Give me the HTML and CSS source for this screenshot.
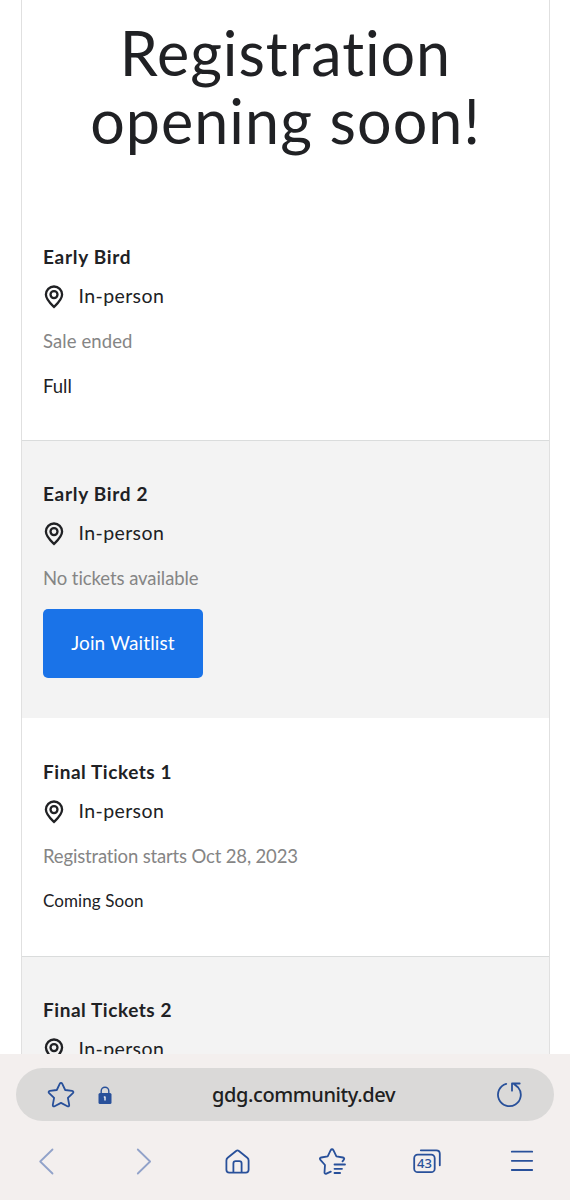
FILE: index.html
```
<!DOCTYPE html>
<html lang="en">
<head>
<meta charset="utf-8">
<title>Registration</title>
<link rel="stylesheet" href="styles.css">
</head>
<body>
<svg class="defs" width="0" height="0">
  <symbol id="pin" viewBox="0 0 20 24">
    <path d="M10 22C7.200 19.300 1.900 14.600 1.900 9.600a8.100 8.100 0 0 1 16.200 0C18.100 14.600 12.800 19.300 10 22Z"/>
    <circle cx="10" cy="9.600" r="3.500"/>
  </symbol>
</svg>
<div class="screen">
  <main class="viewport">
    <div class="card">
      <h1 class="heading"><span class="line1">Registration</span><br><span class="line2">opening soon!</span></h1>
      <section class="ticket first">
        <h2 class="name">Early Bird</h2>
        <div class="place"><svg class="pin"><use href="#pin"/></svg><span>In-person</span></div>
        <p class="status">Sale ended</p>
        <p class="note">Full</p>
      </section>
      <section class="ticket shaded with-button">
        <h2 class="name">Early Bird 2</h2>
        <div class="place"><svg class="pin"><use href="#pin"/></svg><span>In-person</span></div>
        <p class="status snug">No tickets available</p>
        <button class="waitlist">Join Waitlist</button>
      </section>
      <section class="ticket">
        <h2 class="name final">Final Tickets 1</h2>
        <div class="place"><svg class="pin"><use href="#pin"/></svg><span>In-person</span></div>
        <p class="status tight">Registration starts Oct 28, 2023</p>
        <p class="note soon">Coming Soon</p>
      </section>
      <section class="ticket shaded">
        <h2 class="name final">Final Tickets 2</h2>
        <div class="place"><svg class="pin"><use href="#pin"/></svg><span>In-person</span></div>
      </section>
    </div>
  </main>
  <footer class="browser">
    <div class="address">
      <svg class="icon star" viewBox="0 0 28 28"><path d="M14 1.800c.7 0 1 .4 1.300 1l2.900 6.200 6.900.9c1.300.2 1.700 1.300.8 2.200l-5 4.800 1.300 6.900c.2 1.300-.7 2-1.800 1.400L14 21.900l-6.400 3.300c-1.100.6-2-.1-1.800-1.400l1.300-6.900-5-4.800c-.9-.9-.5-2 .8-2.200l6.900-.9 2.900-6.200c.3-.6.600-1 1.300-1Z"/></svg>
      <svg class="lock" viewBox="0 0 14 18"><path class="shackle" d="M3.200 8V5a3.800 3.800 0 0 1 7.600 0v3"/><rect class="body" x=".5" y="7" width="13" height="11" rx="1.500"/><path class="key" d="M7 10.500v4M5.800 11h1.200"/></svg>
      <span class="url">gdg.community.dev</span>
      <svg class="icon reload" viewBox="0 0 28 28"><path d="M11.200 2.800A11.400 11.400 0 1 0 23.200 6.500L18.700 2.700M17 9.700V2.500h7.700"/></svg>
    </div>
    <nav class="tools">
      <svg class="icon faded" viewBox="0 0 28 28"><path d="M20.500 2.500 8.200 14.500l12.300 12"/></svg>
      <svg class="icon faded" viewBox="0 0 28 28"><path d="M10.800 2.500l12.300 12-12.300 12"/></svg>
      <svg class="icon" viewBox="-1.500 -.5 28 28"><path d="M12.600 3.500 4.200 10.200A3.500 3.500 0 0 0 2.900 13v9.300c0 1.800 1 2.800 2.800 2.800h16.600c1.800 0 2.800-1 2.800-2.800V13a3.500 3.500 0 0 0-1.300-2.800L15.400 3.500a2.200 2.200 0 0 0-2.800 0ZM9.900 25v-9c0-1.500.9-2.300 2.300-2.300h3.600c1.400 0 2.300.8 2.300 2.300v9"/></svg>
      <svg class="icon" viewBox="-1 0 28 28"><path d="M11.800 24.600l-4.400 2c-1.100.5-2-.1-1.900-1.300l.5-7.300-4.600-5.200c-.9-1-.5-2.100.8-2.300l6.500-1.100 3-6.200c.7-1.300 2-1.300 2.700 0l3 6.200 6.500 1.100c1.400.3 1.700 1.400.8 2.400l-1.200 1.400M15.500 17.500H26M15.500 21.800h7.500M15.500 26h5.600"/></svg>
      <svg class="icon" viewBox="0 -.5 28 28"><rect x="1.200" y="7.200" width="20.500" height="17.500" rx="3.500"/><path d="M7.800 2.800h15.500c2.400 0 3.500 1.100 3.500 3.500v11.500"/><text x="11.500" y="20.700">43</text></svg>
      <svg class="icon" viewBox="0 0 28 28"><path d="M3.800 4.700h20.400M3.800 13.800h20.400M3.800 23h20.400"/></svg>
    </nav>
  </footer>
</div>
</body>
</html>
```
FILE: styles.css
```
* { box-sizing: border-box; }
body { margin: 0; background: #fff; color: #202124; font-family: Lato, "Liberation Sans", sans-serif; font-variant-ligatures: none; }
.defs { display: block; }
.screen { height: 1200px; display: flex; flex-direction: column; overflow: hidden; }
.viewport { height: 1054px; flex: none; overflow: hidden; padding: 0 20px 0 21px; }
.card { border: solid #e0e0e0; border-width: 0 1px; height: 1400px; }
.heading { margin: 0; padding-top: 19px; height: 203px; font-size: 61px; font-weight: 400; line-height: 68px; text-align: center; }
.line1 { letter-spacing: .950px; }
.line2 { letter-spacing: 1.050px; }
.ticket { height: 238px; padding: 40px 21px 0; }
.ticket.first { height: 237px; }
.ticket.with-button { height: 278px; }
.shaded { background: #f3f3f3; border-top: 1px solid #dadcdc; padding-top: 39px; }
.name { margin: 0; font-size: 19px; line-height: 28px; font-weight: 700; letter-spacing: .7px; }
.name.final { letter-spacing: .55px; }
.place { height: 50px; display: flex; align-items: center; font-size: 19.500px; letter-spacing: .4px; }
.place span { margin-top: -2px; }
.pin { width: 20px; height: 24px; margin: 1px 14.500px 0 1px; fill: none; stroke: #202124; stroke-width: 2.300; }
.status { margin: 0; font-size: 18.500px; line-height: 40px; letter-spacing: .1px; color: #858585; }
.status.snug { letter-spacing: -.070px; }
.status.tight { letter-spacing: -.160px; }
.note { margin: 0; font-size: 18.500px; line-height: 50px; }
.note.soon { font-size: 17px; letter-spacing: .1px; }
.waitlist { display: block; margin: 11px 0 0; width: 160px; height: 69px; border: 0; border-radius: 5px; background: #1a73e8; color: #fff; font-family: inherit; font-size: 19px; letter-spacing: .15px; padding: 0 0 2px; }
.browser { height: 146px; flex: none; background: #f3efee; padding: 14px 16px 0; }
.address { height: 53px; border-radius: 27px; background: #dad9d8; display: flex; align-items: center; padding: 0 31px; }
.icon { width: 28px; height: 28px; fill: none; stroke: #28509a; stroke-width: 1.800; stroke-linecap: round; stroke-linejoin: round; flex: none; }
.lock { width: 14px; height: 18px; margin-left: 23px; }
.shackle { fill: none; stroke: #28509a; stroke-width: 1.400; }
.body { fill: #28509a; }
.key { fill: none; stroke: #e4e6ee; stroke-width: 1.500; }
.url { flex: 1; text-align: center; font: 500 20px "Noto Sans", sans-serif; letter-spacing: -.4px; color: #202020; }
.tools { display: flex; justify-content: space-between; padding: 26px 18px 0 16px; }
.faded { stroke: #91a2c9; }
.icon text { font: 500 13px "Noto Sans", sans-serif; fill: #28509a; stroke: none; text-anchor: middle; }
```
